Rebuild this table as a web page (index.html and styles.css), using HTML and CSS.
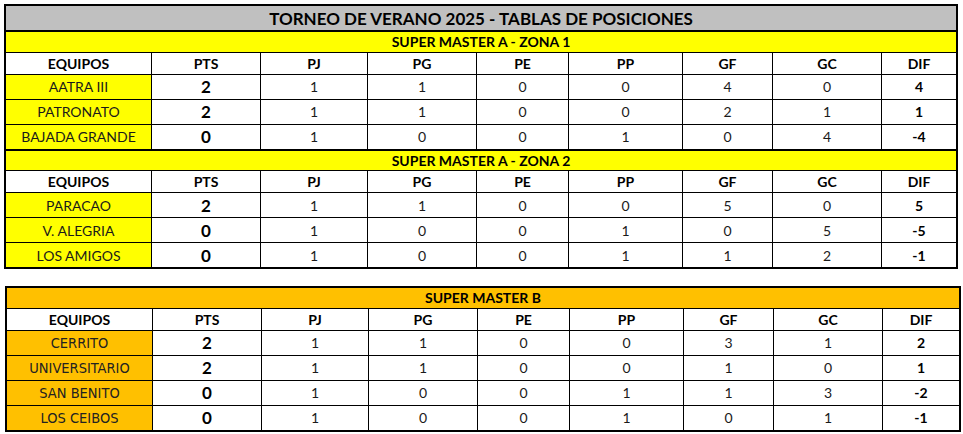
FILE: index.html
```html
<!DOCTYPE html>
<html lang="es">
<head>
<meta charset="utf-8">
<title>Torneo de Verano 2025</title>
<link rel="stylesheet" href="styles.css">
</head>
<body>
<div class="page">
  <table class="standings first">
    <colgroup>
      <col class="c-team"><col class="c-pts"><col class="c-pj"><col class="c-pg"><col class="c-pe"><col class="c-pp"><col class="c-gf"><col class="c-gc"><col class="c-dif">
    </colgroup>
    <tr class="title"><th colspan="9">TORNEO DE VERANO 2025 - TABLAS DE POSICIONES</th></tr>
    <tr class="zone yellow"><th colspan="9">SUPER MASTER A - ZONA 1</th></tr>
    <tr class="head"><th>EQUIPOS</th><th>PTS</th><th>PJ</th><th>PG</th><th>PE</th><th>PP</th><th>GF</th><th>GC</th><th>DIF</th></tr>
    <tr class="row"><td class="team yellow">AATRA III</td><td class="pts">2</td><td>1</td><td>1</td><td>0</td><td>0</td><td>4</td><td>0</td><td class="dif">4</td></tr>
    <tr class="row"><td class="team yellow">PATRONATO</td><td class="pts">2</td><td>1</td><td>1</td><td>0</td><td>0</td><td>2</td><td>1</td><td class="dif">1</td></tr>
    <tr class="row end"><td class="team yellow">BAJADA GRANDE</td><td class="pts">0</td><td>1</td><td>0</td><td>0</td><td>1</td><td>0</td><td>4</td><td class="dif">-4</td></tr>
    <tr class="zone yellow"><th colspan="9">SUPER MASTER A - ZONA 2</th></tr>
    <tr class="head"><th>EQUIPOS</th><th>PTS</th><th>PJ</th><th>PG</th><th>PE</th><th>PP</th><th>GF</th><th>GC</th><th>DIF</th></tr>
    <tr class="row"><td class="team yellow">PARACAO</td><td class="pts">2</td><td>1</td><td>1</td><td>0</td><td>0</td><td>5</td><td>0</td><td class="dif">5</td></tr>
    <tr class="row"><td class="team yellow">V. ALEGRIA</td><td class="pts">0</td><td>1</td><td>0</td><td>0</td><td>1</td><td>0</td><td>5</td><td class="dif">-5</td></tr>
    <tr class="row last"><td class="team yellow">LOS AMIGOS</td><td class="pts">0</td><td>1</td><td>0</td><td>0</td><td>1</td><td>1</td><td>2</td><td class="dif">-1</td></tr>
  </table>

  <table class="standings second">
    <colgroup>
      <col class="c-team"><col class="c-pts"><col class="c-pj"><col class="c-pg"><col class="c-pe"><col class="c-pp"><col class="c-gf"><col class="c-gc"><col class="c-dif">
    </colgroup>
    <tr class="zone orange"><th colspan="9">SUPER MASTER B</th></tr>
    <tr class="head"><th>EQUIPOS</th><th>PTS</th><th>PJ</th><th>PG</th><th>PE</th><th>PP</th><th>GF</th><th>GC</th><th>DIF</th></tr>
    <tr class="row"><td class="team orange narrow">CERRITO</td><td class="pts">2</td><td>1</td><td>1</td><td>0</td><td>0</td><td>3</td><td>1</td><td class="dif">2</td></tr>
    <tr class="row"><td class="team orange narrow">UNIVERSITARIO</td><td class="pts">2</td><td>1</td><td>1</td><td>0</td><td>0</td><td>1</td><td>0</td><td class="dif">1</td></tr>
    <tr class="row"><td class="team orange narrow">SAN BENITO</td><td class="pts">0</td><td>1</td><td>0</td><td>0</td><td>1</td><td>1</td><td>3</td><td class="dif">-2</td></tr>
    <tr class="row last"><td class="team orange narrow">LOS CEIBOS</td><td class="pts">0</td><td>1</td><td>0</td><td>0</td><td>1</td><td>0</td><td>1</td><td class="dif">-1</td></tr>
  </table>
</div>
</body>
</html>
```
FILE: styles.css
```css
html, body {
  margin: 0;
  padding: 0;
  background: #ffffff;
}

.page {
  padding: 4px 0 0 4px;
  display: flex;
  flex-direction: column;
  align-items: flex-start;
  gap: 17px;
  font-family: Lato, "Open Sans", sans-serif;
  color: #000;
}

.standings {
  border-collapse: separate;
  border-spacing: 0;
  border: 2px solid #000;
  table-layout: fixed;
}

.standings.first { width: 954px; }
.standings.second { width: 956px; margin-left: 1px; }

.c-team { width: 146px; }
.c-pts { width: 109px; }
.c-pj { width: 107px; }
.c-pg { width: 109px; }
.c-pe { width: 92px; }
.c-pp { width: 114px; }
.c-gf { width: 90px; }
.c-gc { width: 109px; }
.c-dif { width: auto; }

.standings th,
.standings td {
  padding: 0;
  text-align: center;
  border-right: 1px solid #000;
  border-bottom: 1px solid #000;
  white-space: nowrap;
}

.standings th:last-child,
.standings td:last-child {
  border-right: none;
}

.title th {
  background: #c0c0c0;
  height: 24px;
  font-size: 17px;
  font-weight: 700;
  border-bottom: 2px solid #000;
}

.zone th {
  height: 19.5px;
  font-size: 14px;
  font-weight: 700;
}

.yellow { background: #ffff00; }
.orange { background: #ffc000; }

.head th {
  height: 21px;
  font-size: 14px;
  font-weight: 700;
  background: #fff;
}

.row td {
  height: 24px;
  font-size: 14px;
  color: #1a1a1a;
}

.row.end td { border-bottom: 2px solid #000; }
.row.last td { border-bottom: none; }

.team {
  font-size: 14px;
  color: #111;
}

.team.narrow {
  font-family: "Liberation Sans Narrow", "DejaVu Sans Condensed", "Roboto Condensed", sans-serif;
  font-stretch: condensed;
  font-size: 14.5px;
  color: #222;
}

.pts {
  font-weight: 700;
  font-size: 17px !important;
  color: #000 !important;
}

.dif {
  font-weight: 700;
  color: #000 !important;
}
```
